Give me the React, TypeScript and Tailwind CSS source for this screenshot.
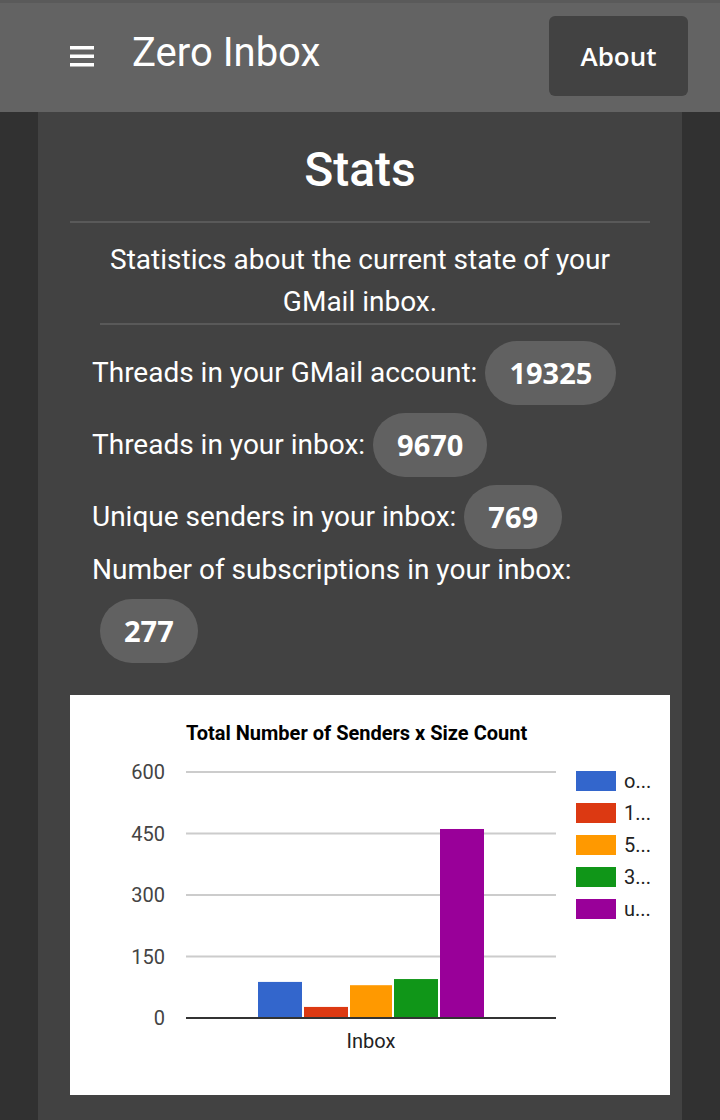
import React from 'react';

interface Stat {
  label: string;
  value: number;
}

const stats: Stat[] = [
  { label: 'Threads in your GMail account:', value: 19325 },
  { label: 'Threads in your inbox:', value: 9670 },
  { label: 'Unique senders in your inbox:', value: 769 },
];

const series = [
  { name: 'o...', color: '#3366cc', value: 88 },
  { name: '1...', color: '#dc3912', value: 27 },
  { name: '5...', color: '#ff9900', value: 80 },
  { name: '3...', color: '#109618', value: 95 },
  { name: 'u...', color: '#990099', value: 461 },
];

const Pill: React.FC<{ value: number; className?: string }> = ({ value, className = '' }) => (
  <span
    className={`inline-flex h-16 items-center rounded-full bg-[#616161] px-6 text-[29px] font-bold text-white ${className}`}
    style={{ fontFamily: '"Open Sans", "Noto Sans", sans-serif' }}
  >
    {value}
  </span>
);

const Chart: React.FC = () => {
  // plot area: x 116..486, y 77 (600) .. 323 (0)
  const top = 77;
  const base = 323;
  const scale = (base - top) / 600;
  const bars = [
    { x: 188, w: 44 },
    { x: 234, w: 44 },
    { x: 280, w: 42 },
    { x: 324, w: 44 },
    { x: 370, w: 44 },
  ];
  const ticks = [600, 450, 300, 150, 0];

  return (
    <div className="h-[400px] w-[600px] bg-white">
      <svg width="600" height="400" viewBox="0 0 600 400" style={{ fontFamily: 'Roboto, sans-serif' }}>
        <text x="116" y="45" fontSize="20" fontWeight="bold" fill="#000">
          Total Number of Senders x Size Count
        </text>
        {ticks.map((t) => {
          const y = base - t * scale;
          return (
            <g key={t}>
              {t !== 0 && <rect x="116" y={y - 1} width="370" height="2" fill="#cccccc" />}
              <text x="95" y={y + 7} fontSize="20" fill="#444" textAnchor="end">
                {t}
              </text>
            </g>
          );
        })}
        {series.map((s, i) => {
          const h = s.value * scale;
          return <rect key={s.name} x={bars[i].x} y={base - h} width={bars[i].w} height={h} fill={s.color} />;
        })}
        <rect x="116" y={base - 1} width="370" height="2" fill="#333" />
        <text x="301" y="353" fontSize="20" fill="#222" textAnchor="middle">
          Inbox
        </text>
        {series.map((s, i) => (
          <g key={s.name}>
            <rect x="506" y={76 + i * 32} width="40" height="20" fill={s.color} />
            <text x="554" y={93 + i * 32} fontSize="20" fill="#222">
              {s.name}
            </text>
          </g>
        ))}
      </svg>
    </div>
  );
};

export default function App() {
  return (
    <div className="min-h-screen bg-[#313131] text-white" style={{ fontFamily: 'Roboto, "Liberation Sans", sans-serif' }}>
      <header className="flex h-[112px] items-center border-t-[3px] border-[#5a5a5a] bg-[#636363] pr-8 pl-[70px]">
        <svg width="24" height="21" viewBox="0 0 24 21" className="-mt-[3px]">
          <rect x="0" y="0" width="24" height="3.5" fill="#fff" />
          <rect x="0" y="8.5" width="24" height="3.5" fill="#fff" />
          <rect x="0" y="17" width="24" height="3.5" fill="#fff" />
        </svg>
        <h1 className="ml-[38px] -mt-[9px] text-[40px] leading-none text-white">Zero Inbox</h1>
        <button
          className="-mt-[3px] ml-auto flex h-20 w-[139px] items-center justify-center rounded-md bg-[#424242] text-[26px] font-semibold text-white"
          style={{ fontFamily: '"Open Sans", "Noto Sans", sans-serif' }}
        >
          About
        </button>
      </header>

      <main className="mx-[38px] min-h-[1008px] bg-[#424242] px-8 pt-[30px] pb-10">
        <h2 className="text-center text-[48px] font-medium leading-[56px]">Stats</h2>
        <div className="mt-[23px] h-[2px] bg-[#595959]" />
        <p className="mx-auto mt-4 w-[520px] text-center text-[28px] leading-[42px]">
          Statistics about the current state of your GMail inbox.
        </p>
        <div className="mx-auto h-[2px] w-[520px] bg-[#595959]" />

        <div className="mt-3 ml-[22px] text-[28px]">
          {stats.map((s) => (
            <div key={s.label} className="flex h-[72px] items-center">
              <span>{s.label}</span>
              <Pill value={s.value} className="ml-2" />
            </div>
          ))}
          <div className="mt-[1px] leading-8">Number of subscriptions in your inbox:</div>
          <Pill value={277} className="mt-[13px] ml-2" />
        </div>

        <div className="mt-8">
          <Chart />
        </div>
      </main>
    </div>
  );
}
